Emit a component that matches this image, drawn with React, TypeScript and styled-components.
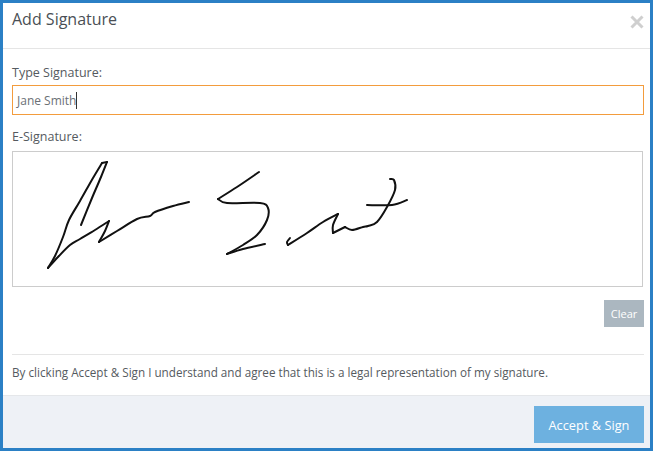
import React from 'react';
import styled, { createGlobalStyle } from 'styled-components';

const GlobalStyle = createGlobalStyle`
  html, body {
    margin: 0;
    padding: 0;
    background: #ffffff;
  }
  * {
    box-sizing: border-box;
  }
`;

const Modal = styled.div`
  width: 653px;
  height: 451px;
  display: flex;
  flex-direction: column;
  border: 3px solid #2b80c5;
  background: #ffffff;
  font-family: 'Open Sans', 'Liberation Sans', sans-serif;
  color: #555a60;
`;

const Header = styled.div`
  height: 46px;
  flex: none;
  display: flex;
  justify-content: space-between;
  align-items: flex-start;
  padding: 5px 6px 0 9px;
  border-bottom: 1px solid #e5e5e5;
`;

const Title = styled.h4`
  margin: 0;
  font-size: 16px;
  line-height: 22px;
  font-weight: 400;
  color: #4a4f55;
`;

const CloseIcon = styled.svg`
  width: 14px;
  height: 14px;
  margin-top: 7px;
`;

const Body = styled.div`
  flex: 1;
  display: flex;
  flex-direction: column;
  padding: 0 6px 0 9px;
`;

const Label = styled.label<{ $top: number }>`
  display: block;
  margin-top: ${(p) => p.$top}px;
  font-size: 12.5px;
  line-height: 17px;
  color: #555a60;
`;

const TypedField = styled.div`
  height: 30px;
  margin-top: 4px;
  display: flex;
  align-items: center;
  padding-left: 4px;
  border: 1px solid #f39c3d;
  font-size: 12px;
  color: #6b7076;
`;

const Caret = styled.span`
  display: inline-block;
  width: 1px;
  height: 17px;
  background: #333333;
`;

const SignaturePad = styled.div`
  width: 631px;
  height: 136px;
  margin-top: 6px;
  border: 1px solid #cccccc;
`;

const SignatureStrokes = styled.svg`
  display: block;
  width: 100%;
  height: 100%;
  fill: none;
  stroke: #111111;
  stroke-width: 2;
  stroke-linecap: round;
  stroke-linejoin: round;
`;

const ClearRow = styled.div`
  display: flex;
  justify-content: flex-end;
  margin-top: 13px;
`;

const ClearButton = styled.button`
  width: 40px;
  height: 27px;
  padding: 0;
  border: none;
  background: #abb7c0;
  color: #ffffff;
  font-family: inherit;
  font-size: 11px;
`;

const Legal = styled.p`
  margin: 27px 0 0;
  height: 41px;
  padding-top: 9px;
  border-top: 1px solid #e5e5e5;
  font-size: 11.7px;
  line-height: 17px;
  color: #555a60;
`;

const Footer = styled.div`
  height: 53px;
  flex: none;
  display: flex;
  justify-content: flex-end;
  align-items: flex-start;
  padding: 10px 6px 0 0;
  background: #eef1f6;
  border-top: 1px solid #e5e7ea;
`;

const AcceptButton = styled.button`
  width: 110px;
  height: 37px;
  padding: 0;
  border: none;
  background: #6db1e0;
  color: #ffffff;
  font-family: inherit;
  font-size: 12.8px;
`;

type Point = [number, number];

// pen strokes in screenshot coordinates, split where the pen turns sharply
const strokes: Point[][] = [
  [[81, 225], [92, 198], [101, 177], [107, 162]],
  [[107, 162], [102, 163]],
  [[102, 163], [93, 178], [80, 201], [69, 220], [63, 237], [55, 256], [48, 268]],
  [[48, 268], [58, 257], [70, 245], [80, 239], [95, 230], [109, 221]],
  [[109, 221], [105, 231], [99, 242]],
  [[99, 242], [117, 231], [137, 219], [150, 216], [155, 212], [173, 206], [189, 202]],
  [[259, 172], [237, 187], [218, 199]],
  [[218, 199], [227, 203], [260, 203], [268, 208], [267, 220], [257, 235], [243, 245], [227, 254]],
  [[227, 254], [243, 249], [265, 244]],
  [[290, 238], [287, 242], [288, 245]],
  [[288, 245], [307, 233], [323, 222], [338, 214]],
  [[338, 214], [333, 225], [333, 233]],
  [[333, 233], [345, 227]],
  [[345, 227], [352, 230], [363, 227], [368, 226], [377, 222], [387, 207], [395, 190], [394, 180], [390, 179]],
  [[367, 205], [392, 205], [407, 200]],
];

// the svg sits inside the pad border, whose inner corner is at (13, 152)
const toPath = (points: Point[]) => {
  const pts = points.map(([x, y]): Point => [x - 13, y - 152]);
  let d = `M${pts[0][0]} ${pts[0][1]}`;
  for (let i = 0; i < pts.length - 1; i++) {
    const p0 = pts[Math.max(i - 1, 0)];
    const p1 = pts[i];
    const p2 = pts[i + 1];
    const p3 = pts[Math.min(i + 2, pts.length - 1)];
    const c1x = p1[0] + (p2[0] - p0[0]) / 6;
    const c1y = p1[1] + (p2[1] - p0[1]) / 6;
    const c2x = p2[0] - (p3[0] - p1[0]) / 6;
    const c2y = p2[1] - (p3[1] - p1[1]) / 6;
    d += ` C${c1x} ${c1y} ${c2x} ${c2y} ${p2[0]} ${p2[1]}`;
  }
  return d;
};

const App: React.FC = () => {
  return (
    <>
      <GlobalStyle />
      <Modal>
        <Header>
          <Title>Add Signature</Title>
          <CloseIcon viewBox="0 0 14 14" aria-hidden="true">
            <path
              d="M1.5 1.5L12.5 12.5M12.5 1.5L1.5 12.5"
              stroke="#cfcfcf"
              strokeWidth="3"
              fill="none"
            />
          </CloseIcon>
        </Header>
        <Body>
          <Label $top={15}>Type Signature:</Label>
          <TypedField>
            Jane Smith
            <Caret />
          </TypedField>
          <Label $top={13}>E-Signature:</Label>
          <SignaturePad>
            <SignatureStrokes viewBox="0 0 629 134">
              {strokes.map((stroke, i) => (
                <path key={i} d={toPath(stroke)} />
              ))}
            </SignatureStrokes>
          </SignaturePad>
          <ClearRow>
            <ClearButton>Clear</ClearButton>
          </ClearRow>
          <Legal>
            By clicking Accept &amp; Sign I understand and agree that this is a
            legal representation of my signature.
          </Legal>
        </Body>
        <Footer>
          <AcceptButton>Accept &amp; Sign</AcceptButton>
        </Footer>
      </Modal>
    </>
  );
};

export default App;
